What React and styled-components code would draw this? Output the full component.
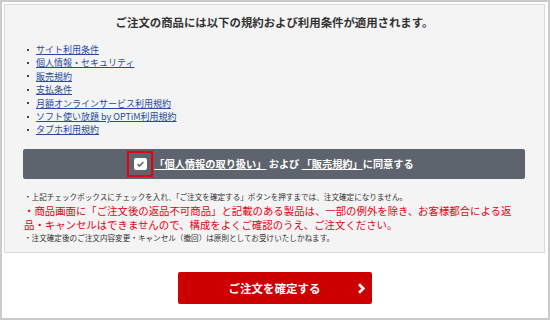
import { styled, createGlobalStyle } from 'styled-components';

const GlobalStyle = createGlobalStyle`
  body {
    margin: 0;
    background: #ffffff;
    font-family: 'Noto Sans CJK JP', 'Noto Sans', sans-serif;
  }
`;

const terms = [
  'サイト利用条件',
  '個人情報・セキュリティ',
  '販売規約',
  '支払条件',
  '月額オンラインサービス利用規約',
  'ソフト使い放題 by OPTiM利用規約',
  'タブホ利用規約',
];

const App = () => {
  return (
    <Frame>
      <GlobalStyle />
      <Panel>
        <Title>ご注文の商品には以下の規約および利用条件が適用されます。</Title>
        <TermList>
          {terms.map((t) => (
            <TermItem key={t}>
              <TermLink href="#">{t}</TermLink>
            </TermItem>
          ))}
        </TermList>

        <AgreeBar>
          <CheckFrame>
            <svg width="13" height="12" viewBox="0 0 13 12">
              <rect x="0" y="0" width="13" height="12" rx="2" fill="#ffffff" />
              <path d="M3.6 6.2 L5.6 8.1 L9.4 4" fill="none" stroke="#6b6f75" strokeWidth="1.6" />
            </svg>
          </CheckFrame>
          <AgreeText>
            <AgreeLink href="#">「個人情報の取り扱い」</AgreeLink> および <AgreeLink href="#">「販売規約」</AgreeLink>に同意する
          </AgreeText>
        </AgreeBar>

        <Notes>
          <SmallNote>・上記チェックボックスにチェックを入れ、「ご注文を確定する」ボタンを押すまでは、注文確定になりません。</SmallNote>
          <WarnNote>
            ・商品画面に「ご注文後の返品不可商品」と記載のある製品は、一部の例外を除き、お客様都合による返
            <br />
            品・キャンセルはできませんので、構成をよくご確認のうえ、ご注文ください。
          </WarnNote>
          <SmallNote>・注文確定後のご注文内容変更・キャンセル（撤回）は原則としてお受けいたしかねます。</SmallNote>
        </Notes>
      </Panel>

      <ConfirmButton type="button">
        <span />
        <ButtonLabel>ご注文を確定する</ButtonLabel>
        <ButtonArrow>
          <svg width="9" height="11" viewBox="0 0 9 11">
            <path d="M2 1.2 L6.4 5.5 L2 9.8" fill="none" stroke="#ffffff" strokeWidth="2.6" />
          </svg>
        </ButtonArrow>
      </ConfirmButton>
    </Frame>
  );
};

export default App;

const Frame = styled.div`
  width: 550px;
  height: 320px;
  box-sizing: border-box;
  border: 2px solid #cbcbcb;
  padding: 2px 3px 0 2px;
  display: flex;
  flex-direction: column;
  align-items: stretch;
`;

const Panel = styled.div`
  height: 249px;
  box-sizing: border-box;
  border: 1px solid #d9d9d9;
  background: #f4f4f4;
  padding-top: 7px;
  display: flex;
  flex-direction: column;
`;

const Title = styled.h1`
  margin: 0;
  font-size: 11.4px;
  line-height: 20px;
  font-weight: 700;
  color: #333333;
  text-align: center;
`;

const TermList = styled.ul`
  list-style: none;
  margin: 11px 0 0;
  padding: 0 0 0 22px;
`;

const TermItem = styled.li`
  display: flex;
  align-items: center;
  height: 13.4px;
  font-size: 9px;

  &::before {
    content: '';
    width: 2px;
    height: 2px;
    background: #444444;
    margin-right: 7px;
  }
`;

const TermLink = styled.a`
  color: #274a9c;
  text-decoration: underline;
  line-height: 13.4px;
`;

const AgreeBar = styled.div`
  margin: 12px 19px 0 18px;
  height: 30px;
  border-radius: 2px;
  background: #5e646d;
  display: flex;
  align-items: center;
  justify-content: center;
  padding-right: 7px;
`;

const CheckFrame = styled.span`
  width: 26px;
  height: 26px;
  box-sizing: border-box;
  border: 2px solid #e60012;
  display: flex;
  align-items: center;
  justify-content: center;
  margin-right: 1px;

  svg {
    display: block;
  }
`;

const AgreeText = styled.span`
  color: #ffffff;
  font-size: 10.2px;
  font-weight: 700;
  line-height: 14px;
  white-space: nowrap;
`;

const AgreeLink = styled.a`
  color: #ffffff;
  text-decoration: underline;
`;

const Notes = styled.div`
  margin-top: 12.5px;
  padding-left: 19px;
  display: flex;
  flex-direction: column;
`;

const SmallNote = styled.p`
  margin: 0;
  font-size: 7.6px;
  line-height: 11px;
  color: #333333;
  white-space: nowrap;
`;

const WarnNote = styled.p`
  margin: 1.6px 0 0;
  font-size: 10.4px;
  line-height: 14.3px;
  color: #e60012;
  white-space: nowrap;
`;

const ConfirmButton = styled.button`
  align-self: center;
  margin-top: 19px;
  width: 194px;
  height: 32px;
  border: none;
  border-radius: 2px;
  background: #cc0000;
  padding: 0 6px;
  display: grid;
  grid-template-columns: 1fr auto 1fr;
  align-items: center;
  cursor: pointer;
  font-family: inherit;
`;

const ButtonLabel = styled.span`
  color: #ffffff;
  font-size: 11.5px;
  font-weight: 700;
  line-height: 16px;
`;

const ButtonArrow = styled.span`
  justify-self: end;
  display: flex;

  svg {
    display: block;
  }
`;
